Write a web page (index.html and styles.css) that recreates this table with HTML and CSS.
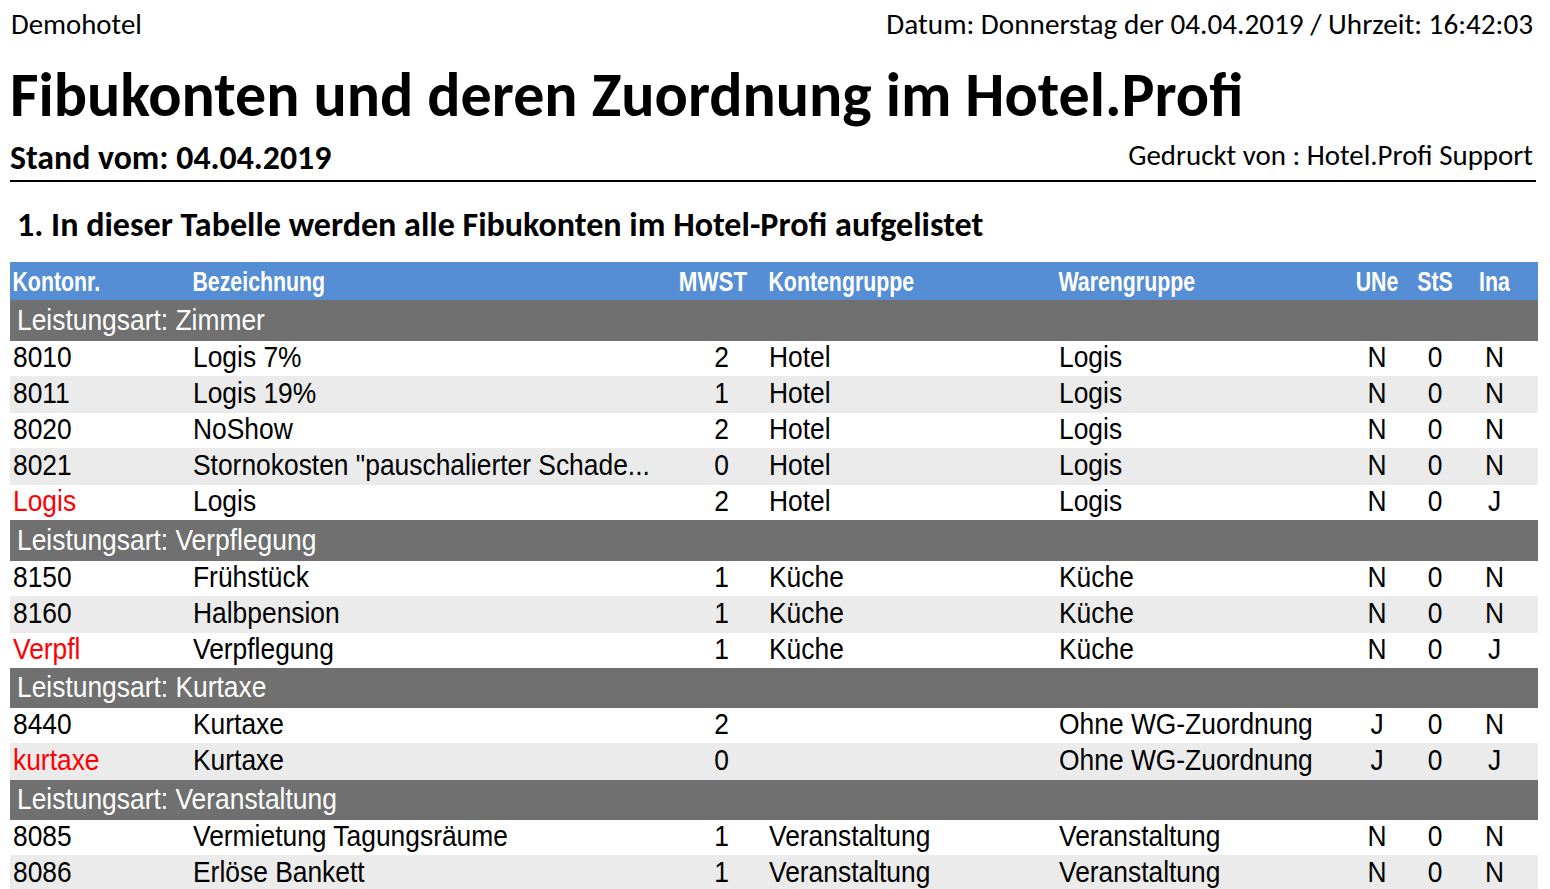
FILE: index.html
```html
<!DOCTYPE html>
<html lang="de">
<head>
<meta charset="utf-8">
<title>Fibukonten und deren Zuordnung im Hotel.Profi</title>
<link rel="stylesheet" href="styles.css">
</head>
<body>
<div class="page">
  <header class="top">
    <span class="hotel">Demohotel</span>
    <span class="datum">Datum: Donnerstag der 04.04.2019 / Uhrzeit: 16:42:03</span>
  </header>
  <h1 class="title">Fibukonten und deren Zuordnung im Hotel.Profi</h1>
  <div class="sub">
    <span class="stand">Stand vom: 04.04.2019</span>
    <span class="printed">Gedruckt von : Hotel.Profi Support</span>
  </div>
  <div class="rule"></div>
  <h2 class="section">1. In dieser Tabelle werden alle Fibukonten im Hotel-Profi aufgelistet</h2>

  <div class="table">
    <div class="row head">
      <div class="c">Kontonr.</div>
      <div class="c">Bezeichnung</div>
      <div class="c num">MWST</div>
      <div class="c">Kontengruppe</div>
      <div class="c">Warengruppe</div>
      <div class="c ctr">UNe</div>
      <div class="c ctr">StS</div>
      <div class="c ctr">Ina</div>
    </div>

    <div class="row group tall"><div class="g">Leistungsart: Zimmer</div></div>
    <div class="row"><div class="c">8010</div><div class="c">Logis 7%</div><div class="c num">2</div><div class="c">Hotel</div><div class="c">Logis</div><div class="c ctr">N</div><div class="c ctr">0</div><div class="c ctr">N</div></div>
    <div class="row alt"><div class="c">8011</div><div class="c">Logis 19%</div><div class="c num">1</div><div class="c">Hotel</div><div class="c">Logis</div><div class="c ctr">N</div><div class="c ctr">0</div><div class="c ctr">N</div></div>
    <div class="row"><div class="c">8020</div><div class="c">NoShow</div><div class="c num">2</div><div class="c">Hotel</div><div class="c">Logis</div><div class="c ctr">N</div><div class="c ctr">0</div><div class="c ctr">N</div></div>
    <div class="row alt"><div class="c">8021</div><div class="c">Stornokosten "pauschalierter Schade...</div><div class="c num">0</div><div class="c">Hotel</div><div class="c">Logis</div><div class="c ctr">N</div><div class="c ctr">0</div><div class="c ctr">N</div></div>
    <div class="row"><div class="c red">Logis</div><div class="c">Logis</div><div class="c num">2</div><div class="c">Hotel</div><div class="c">Logis</div><div class="c ctr">N</div><div class="c ctr">0</div><div class="c ctr">J</div></div>

    <div class="row group tall"><div class="g">Leistungsart: Verpflegung</div></div>
    <div class="row"><div class="c">8150</div><div class="c">Frühstück</div><div class="c num">1</div><div class="c">Küche</div><div class="c">Küche</div><div class="c ctr">N</div><div class="c ctr">0</div><div class="c ctr">N</div></div>
    <div class="row alt"><div class="c">8160</div><div class="c">Halbpension</div><div class="c num">1</div><div class="c">Küche</div><div class="c">Küche</div><div class="c ctr">N</div><div class="c ctr">0</div><div class="c ctr">N</div></div>
    <div class="row"><div class="c red">Verpfl</div><div class="c">Verpflegung</div><div class="c num">1</div><div class="c">Küche</div><div class="c">Küche</div><div class="c ctr">N</div><div class="c ctr">0</div><div class="c ctr">J</div></div>

    <div class="row group"><div class="g">Leistungsart: Kurtaxe</div></div>
    <div class="row"><div class="c">8440</div><div class="c">Kurtaxe</div><div class="c num">2</div><div class="c"></div><div class="c">Ohne WG-Zuordnung</div><div class="c ctr">J</div><div class="c ctr">0</div><div class="c ctr">N</div></div>
    <div class="row alt"><div class="c red">kurtaxe</div><div class="c">Kurtaxe</div><div class="c num">0</div><div class="c"></div><div class="c">Ohne WG-Zuordnung</div><div class="c ctr">J</div><div class="c ctr">0</div><div class="c ctr">J</div></div>

    <div class="row group"><div class="g">Leistungsart: Veranstaltung</div></div>
    <div class="row"><div class="c">8085</div><div class="c">Vermietung Tagungsräume</div><div class="c num">1</div><div class="c">Veranstaltung</div><div class="c">Veranstaltung</div><div class="c ctr">N</div><div class="c ctr">0</div><div class="c ctr">N</div></div>
    <div class="row alt"><div class="c">8086</div><div class="c">Erlöse Bankett</div><div class="c num">1</div><div class="c">Veranstaltung</div><div class="c">Veranstaltung</div><div class="c ctr">N</div><div class="c ctr">0</div><div class="c ctr">N</div></div>
  </div>
</div>
</body>
</html>
```

FILE: styles.css
```css
* { box-sizing: border-box; }
html, body { margin: 0; padding: 0; background: #fff; }
body {
  font-family: Carlito, Lato, "Open Sans", sans-serif;
  color: #000;
  overflow: hidden;
}
.page {
  width: 1550px;
  padding: 0 12px 0 10px;
}

/* header lines */
.top {
  display: flex;
  justify-content: space-between;
  align-items: flex-start;
  height: 41px;
  padding: 3px 5px 0 1px;
  line-height: 40px;
}
.hotel { font-size: 28.8px; padding-top: 2px; }
.datum { font-size: 29.2px; padding-top: 1px; }
.title {
  margin: 19px 0 0 0;
  height: 70px;
  font-size: 62px;
  font-weight: 700;
  line-height: 70px;
  white-space: nowrap;
}
.sub {
  display: flex;
  justify-content: space-between;
  align-items: flex-start;
  height: 50px;
  padding-right: 5px;
}
.stand {
  display: block;
  padding-top: 8px;
  font-size: 33.8px;
  font-weight: 700;
  line-height: 40px;
}
.printed {
  display: block;
  padding-top: 5px;
  font-size: 28.9px;
  line-height: 40px;
}
.rule {
  height: 2px;
  background: #000;
  margin-right: 2px;
}
.section {
  margin: 23px 0 0 0;
  height: 40px;
  padding-left: 7px;
  font-size: 34.1px;
  font-weight: 700;
  line-height: 40px;
  white-space: nowrap;
}

/* table */
.table {
  width: 1528px;
  margin-top: 17px;
  font-family: "Liberation Sans", Arial, sans-serif;
  font-size: 26.4px;
}
.row {
  display: grid;
  grid-template-columns: 180px 470px 106px 290px 291px 60px 56px 63px 12px;
  height: 35px;
  align-items: center;
  background: #fff;
}
.row.alt { height: 37px; background: #ebebeb; }
.row.head {
  height: 38px;
  background: #558ed5;
  color: #fff;
  font-size: 26px;
  font-weight: 700;
}
.row.group {
  display: flex;
  height: 40px;
  background: #707070;
  color: #fff;
}
.row.group.tall { height: 41px; }
.g {
  padding-left: 7px;
  padding-bottom: 2px;
  line-height: 30px;
  transform: scaleY(1.1);
}
.c {
  padding-left: 3px;
  padding-bottom: 4px;
  white-space: nowrap;
  line-height: 30px;
  transform: scaleY(1.1);
}
.head .c {
  padding-bottom: 1px;
  transform: scale(0.82, 1.08);
  transform-origin: left center;
}
.head .num { transform-origin: right center; }
.head .ctr { transform-origin: center center; }
.num { text-align: right; padding-right: 37px; }
.head .num { padding-right: 22px; transform: scale(0.86, 1.08); }
.ctr { text-align: center; padding-left: 0; }
.red { color: #ff0000; }
```
